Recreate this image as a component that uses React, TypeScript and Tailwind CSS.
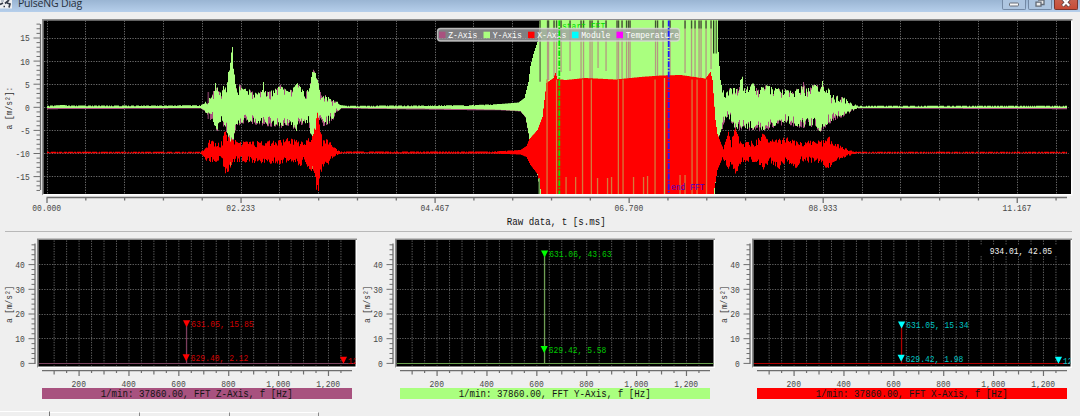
import React from "react";

type Pt = [number, number];

function at(pts: Pt[], x: number) {
  if (x <= pts[0][0]) return pts[0][1];
  for (let i = 1; i < pts.length; i++) {
    if (x <= pts[i][0]) {
      const [x0, y0] = pts[i - 1];
      const [x1, y1] = pts[i];
      return y0 + ((y1 - y0) * (x - x0)) / (x1 - x0);
    }
  }
  return pts[pts.length - 1][1];
}

function rand(n: number) {
  const v = Math.sin(n * 127.1 + 11.7) * 43758.5453;
  return v - Math.floor(v);
}

// Builds a filled min/max envelope with per-pixel jitter that grows with the amplitude.
function envelope(top: Pt[], bot: Pt[], centre: number, jitter: number, seed: number) {
  const up: string[] = [];
  const down: string[] = [];
  for (let x = 47; x < 1067; x++) {
    const rough = (x > 204 && x < 338) || (x > 721 && x < 858);
    const k = rough ? jitter : 0;
    let a = at(top, x);
    let b = at(bot, x);
    a += k * (Math.pow(rand(x + seed), 2) * 1.3 - 0.45) * Math.min(1, (centre - a) / 8);
    b -= k * (Math.pow(rand(x * 3 + seed), 2) * 1.3 - 0.45) * Math.min(1, (b - centre) / 8);
    if (!rough && Math.abs(a - centre) < 3) a += rand(x + seed * 2) > 0.72 ? 0.7 : 0;
    const yt = Math.max(20, a).toFixed(1);
    const yb = Math.min(194, b).toFixed(1);
    up.push(`${x},${yt} ${x + 1},${yt}`);
    down.push(`${x + 1},${yb} ${x},${yb}`);
  }
  return up.join(" ") + " " + down.reverse().join(" ");
}

const greenTop: Pt[] = [[47, 105.8], [62, 105], [72, 105.6], [200, 105.3], [204, 103.5], [207, 103], [212, 97], [215, 86], [218, 93], [221, 97], [223, 88], [226, 92], [228, 75], [230, 64], [231, 49], [232, 50], [233, 68], [235, 87], [238, 92], [239, 86], [242, 91], [250, 93], [256, 96], [262, 93], [263, 85], [265, 94], [270, 94], [275, 91], [280, 87], [285, 92], [291, 92], [297, 86], [303, 94], [308, 93], [311, 80], [312, 70], [314, 71], [316, 80], [318, 86], [319, 93], [323, 98], [326, 95], [329, 101], [335, 102], [340, 105], [345, 105.8], [470, 105.2], [500, 104], [518, 102.5], [524, 98], [528, 82], [530, 66], [533, 54], [537, 42], [539, 24], [540, 20], [717, 20], [718, 52], [720, 80], [722, 90], [725, 98], [728, 91], [738, 91], [740, 82], [742, 79], [743, 92], [750, 88], [753, 86], [757, 92], [765, 88], [775, 91], [790, 93], [802, 89], [803, 84], [805, 92], [810, 90], [816, 85], [820, 91], [822, 84], [825, 94], [828, 90], [831, 98], [840, 98.5], [850, 103], [857, 105.7], [1067, 105.7]];
const greenBot: Pt[] = [[47, 108], [200, 108], [207, 112], [213, 119], [216, 129], [220, 119], [225, 124], [228, 135], [230, 142], [232, 142], [234, 130], [237, 122], [245, 118], [260, 121], [270, 122], [280, 124], [290, 121], [296, 128], [298, 121], [308, 120], [312, 141], [314, 136], [318, 118], [322, 122], [327, 121], [335, 113], [341, 108], [470, 109], [500, 109.8], [520, 111], [525, 117], [528, 133], [530, 150], [537, 175], [540, 194], [714, 194], [717, 160], [719, 135], [722, 126], [725, 114], [733, 120], [735, 129], [740, 125], [763, 127], [775, 123], [785, 120], [800, 124], [815, 122], [820, 130], [823, 125], [833, 116], [843, 113], [857, 108], [1067, 108]];
const redTop: Pt[] = [[47, 151.7], [200, 151.7], [207, 148], [209, 141], [215, 145], [222, 143], [224, 131], [227, 137], [230, 140], [237, 143], [250, 144], [260, 143], [265, 145], [270, 142], [280, 142], [287, 140], [300, 143], [307, 141], [312, 138], [315, 127], [317, 114], [319, 125], [322, 142], [327, 140], [333, 148], [340, 151.6], [490, 151.6], [520, 150], [526, 146], [529, 139], [537, 130], [542, 117], [546, 83], [553, 78], [555, 73], [557, 79], [565, 80], [585, 78], [615, 79.5], [640, 77], [660, 75.5], [680, 75], [705, 78.5], [710, 72], [712, 80], [715, 120], [717, 134], [722, 147], [725, 144], [728, 134], [731, 143], [734, 129], [736, 133], [740, 143], [755, 143], [763, 135], [770, 142], [778, 141], [788, 139], [795, 143], [815, 143], [825, 142], [828, 137], [831, 143], [840, 147], [848, 150], [856, 151.7], [1067, 151.7]];
const redBot: Pt[] = [[47, 153.3], [200, 153.3], [207, 160], [215, 160], [222, 160], [225, 173], [229, 168], [233, 160], [240, 160], [260, 161], [280, 162], [290, 159], [300, 165], [303, 160], [310, 168], [314, 171], [316, 188], [318, 189], [320, 172], [325, 160], [327, 165], [331, 158], [335, 155], [342, 153.3], [490, 153.5], [520, 154.5], [526, 157], [530, 165], [537, 174], [541, 194], [713, 194], [717, 170], [722, 158], [725, 162], [728, 167], [732, 165], [735, 173], [741, 160], [755, 160], [763, 169], [770, 161], [779, 167], [785, 160], [796, 166], [800, 160], [820, 161], [828, 168], [833, 160], [845, 156], [856, 153.3], [1067, 153.3]];
const quiet = (x: number) => x < 200 || x > 860 || (x > 341 && x < 500);
const purpleTop = greenTop.map(([x, y]): Pt => [x, quiet(x) ? y + 1 : y + 1.5]);
const purpleBot = greenBot.map(([x, y]): Pt => [x, Math.min(194, quiet(x) ? y + 1.2 : y + 0.5)]);

// x and lower end of the dropouts in the saturated section
const stripes: Pt[] = [[540, 82], [547.5, 80], [548.5, 80], [554, 77], [556.5, 77], [561, 72], [570, 71], [581, 79], [583.5, 79], [590, 79], [592, 79], [598, 68], [606, 71], [617, 79], [618.5, 79], [622, 79], [626.5, 79], [628.5, 79], [630, 79], [655.5, 76], [657.5, 76], [663, 76], [670, 76], [685, 73], [691.5, 76], [695, 77], [699, 77], [701, 78], [706, 78], [711, 69]];
const fullLines = [547, 556.5, 582.5, 591.3, 618.3, 623, 655, 664.5, 692, 697, 706.5];
const shortLines: Pt[] = [[566, 177], [575.6, 177], [597.5, 178], [607.5, 178], [611.5, 177], [633.5, 177], [643.5, 177], [647.5, 176], [680, 175], [685, 175]];

const legend: [string, string, number][] = [
  ["Z-Axis", "#a8527f", 439],
  ["Y-Axis", "#aaff7f", 483.5],
  ["X-Axis", "#ff0000", 528],
  ["Module", "#00ffff", 572],
  ["Temperature", "#ff00ff", 616.5],
];

const mono = "font-['Liberation_Mono',monospace]";

type LabelProps = { x: number; y: number; fill: string; children: string; anchor?: "start" | "middle" | "end"; pitch?: number; size?: number };

// Condensed fixed-pitch label: every character takes `pitch` pixels.
function Label({ x, y, fill, children, anchor = "start", pitch = 4.8, size = 9.3 }: LabelProps) {
  return (
    <text x={x} y={y} fill={fill} fontSize={size} textAnchor={anchor} textLength={children.length * pitch} lengthAdjust="spacingAndGlyphs">
      {children}
    </text>
  );
}

function Frame({ x, y, w, h }: { x: number; y: number; w: number; h: number }) {
  return (
    <g>
      <rect x={x - 1.5} y={y - 1.5} width={w + 3} height={h + 3} fill="#fff" />
      <path d={`M${x - 1.5} ${y + h + 1.5}V${y - 1.5}H${x + w + 1.5}V${y}H${x}V${y + h}Z`} fill="#8c8c8c" />
      <rect x={x} y={y} width={w} height={h} fill="#000" />
    </g>
  );
}

function RawChart() {
  const xs = Array.from({ length: 27 }, (_, i) => 47 + i * 38.81);
  const y0 = (v: number) => 107.3 - v * 4.62;
  return (
    <svg className={`block h-[219px] w-[1080px] shrink-0 ${mono}`} viewBox="0 12 1080 219">
      <Frame x={43.5} y={20.5} w={1027.5} h={173.5} />
      <g stroke="#6a6a6a" strokeWidth="1" strokeDasharray="1.3 1.3">
        {xs.map((x) => <line key={x} x1={Math.floor(x) + 0.5} x2={Math.floor(x) + 0.5} y1="20.5" y2="194" />)}
        {[15, 10, 5, 0, -5, -10, -15].map((v) => (
          <line key={v} x1="44" x2="1069" y1={Math.floor(y0(v)) + 0.5} y2={Math.floor(y0(v)) + 0.5} />
        ))}
      </g>
      <polygon points={envelope(purpleTop, purpleBot, 107.3, 9, 5)} fill="#a8527f" />
      <rect x="207.5" y="92" width="1.6" height="27" fill="#6b3452" />
      <polygon points="316,78 318,80 320,94 316,94" fill="#a8527f" />
      <polygon points={envelope(greenTop, greenBot, 107.3, 7, 40)} fill="#aaff7f" />
      <g>
        {stripes.map(([x, b]) => (
          <g key={x}>
            <rect x={x - 0.6} y="20.5" width="1.3" height={b - 20.5} fill="#b39a80" />
            <rect x={x - 0.6} y="20.5" width="1.3" height="8" fill="#3d5a30" />
          </g>
        ))}
        <rect x="539.5" y="20.5" width="1.3" height="61" fill="#5e8a48" />
        <rect x="713" y="20.5" width="1.3" height="33" fill="#253a1c" />
        <rect x="715.7" y="20.5" width="1" height="33" fill="#253a1c" />
      </g>
      <polygon points={envelope(redTop, redBot, 152.5, 5, 90)} fill="#ff0000" />
      <g fill="#d5793b">
        {fullLines.map((x) => <rect key={x} x={x - 0.6} y="79.5" width="1.3" height="114.5" />)}
        {shortLines.map(([x, t]) => <rect key={x} x={x - 0.6} y={t} width="1.3" height={194 - t} />)}
        <rect x="663.9" y="78" width="1.2" height="116" fill="#cfb35b" />
        <rect x="230" y="162" width="1" height="4" />
        <rect x="312" y="166" width="1" height="3" />
      </g>
      <rect x="538.5" y="178" width="1.5" height="16" fill="#6a9f50" />
      <Label x={562} y={29} fill="#00dc00">start FFT</Label>
      <rect x="437.5" y="28.5" width="242" height="12.5" rx="3" fill="#a0a0a4" fillOpacity="0.8" stroke="#d8d8d8" strokeOpacity="0.8" strokeWidth="1.4" />
      {legend.map(([name, color, x]) => (
        <g key={name}>
          <rect x={x} y="31.7" width="6.5" height="6.5" fill={color} />
          <Label x={x + 9.2} y={38} fill="#fff" pitch={4.85}>{name}</Label>
        </g>
      ))}
      <line x1="559.3" x2="559.3" y1="20.5" y2="194" stroke="#00e800" strokeWidth="1.8" strokeDasharray="5.5 1.5 1.5 1.5" />
      <line x1="668.7" x2="668.7" y1="20.5" y2="194" stroke="#1c1cff" strokeWidth="1.8" strokeDasharray="6 1.3 1.6 1.3" />
      <Label x={671} y={189.5} fill="#4a00c8">end FFT</Label>

      <g stroke="#6e6e6e">
        <line x1="40.5" x2="40.5" y1="24" y2="190" strokeWidth="1.3" />
        {Array.from({ length: 37 }, (_, i) => i - 18).map((v) => (
          <line key={v} x1={v % 5 === 0 ? 33.5 : 36.5} x2="40" y1={y0(v)} y2={y0(v)} />
        ))}
        <line x1="46.5" x2="1067" y1="197.6" y2="197.6" strokeWidth="1.5" />
        {xs.map((x, i) => <line key={x} x1={x} x2={x} y1="198" y2={i % 5 === 0 ? 203 : 200.5} strokeWidth="1.3" />)}
      </g>
      {[15, 10, 5, 0, -5, -10, -15].map((v) => (
        <Label key={v} x={29.8} y={y0(v) + 3.4} anchor="end" fill="#484848">{String(v)}</Label>
      ))}
      {["00.000", "02.233", "04.467", "06.700", "08.933", "11.167"].map((t, i) => (
        <Label key={t} x={46.7 + i * 194.05} y={211.2} anchor="middle" fill="#484848">{t}</Label>
      ))}
      <Label x={556.3} y={225} anchor="middle" fill="#151515" pitch={5.5} size={10.6}>Raw data, t [s.ms]</Label>
      <g transform="translate(11.5 129.5) rotate(-90)">
        <Label x={0} y={0} fill="#303030" pitch={4.75} size={9.6}>a [m/s²]:</Label>
      </g>
    </svg>
  );
}

type Marker = { hz: number; v: number; text: string };
type FftProps = {
  axis: string;
  bar: string;
  line: string;
  peak: string;
  marker: string;
  label: string;
  markers: Marker[];
  cursor?: string;
};

function FftChart({ axis, bar, line, peak, marker, label, markers, cursor }: FftProps) {
  const X = (hz: number) => 29.2 + hz * 0.2494;
  const Y = (v: number) => 363.4 - v * 2.47;
  const top = Math.max(...markers.map((m) => m.v));
  const halves = Array.from({ length: 24 }, (_, i) => 100 + i * 50);
  return (
    <section className="flex min-w-0 flex-col">
      <svg className={`block h-[156px] w-[357px] ${mono}`} viewBox="0 232 357 156">
        <clipPath id={`plot${axis}`}><rect x="38.5" y="240" width="317" height="126.5" /></clipPath>
        <Frame x={38.5} y={240} w={317} h={126.5} />
        <g stroke="#606060" strokeDasharray="1.3 1.3">
          {halves.map((h) => <line key={h} x1={X(h)} x2={X(h)} y1="240.5" y2="366" />)}
          {[10, 20, 30, 40].map((v) => <line key={v} x1="39" x2="355" y1={Math.floor(Y(v)) + 0.5} y2={Math.floor(Y(v)) + 0.5} />)}
        </g>
        <g clipPath={`url(#plot${axis})`}>
          <rect x="39" y="363" width="317" height="1" fill={line} />
          <rect x="185.9" y={Y(top)} width="1.3" height={363.5 - Y(top)} fill={peak} />
          {markers.map((m) => (
            <g key={m.text}>
              <path d={`M${X(m.hz) - 3.6} ${Y(m.v) - 3.6}h7.2l-3.6 7z`} fill={marker} />
              <Label x={X(m.hz) + 4.6} y={Y(m.v) + 3.1} fill={label}>{m.text}</Label>
            </g>
          ))}
          {cursor && (
            <g>
              <rect x="265" y="245" width="80" height="11" fill="#000" />
              <Label x={274.7} y={253.9} fill="#f0f0f0">{cursor}</Label>
            </g>
          )}
        </g>
        <g stroke="#6e6e6e">
          <line x1="35" x2="35" y1="243.5" y2="364" strokeWidth="1.3" />
          {Array.from({ length: 25 }, (_, i) => i * 2).map((v) => (
            <line key={v} x1={v % 10 === 0 ? 28.5 : 31.5} x2="35" y1={Y(v)} y2={Y(v)} />
          ))}
          <line x1="42" x2="352" y1="370.7" y2="370.7" strokeWidth="1.3" />
          {halves.map((h) => <line key={h} x1={X(h)} x2={X(h)} y1="371" y2={h % 200 === 0 ? 376 : h % 100 === 0 ? 374.5 : 373} strokeWidth="1.2" />)}
        </g>
        {[0, 10, 20, 30, 40].map((v) => <Label key={v} x={24.9} y={Y(v) + 3.3} anchor="end" fill="#484848">{String(v)}</Label>)}
        {[200, 400, 600, 800, 1000, 1200].map((v) => (
          <Label key={v} x={X(v) - 0.3} y={387} anchor="middle" fill="#484848">{v.toLocaleString("en-US")}</Label>
        ))}
        <g transform="translate(11.5 323) rotate(-90)">
          <Label x={0} y={0} fill="#303030" pitch={4.65} size={9.6}>a [m/s²]</Label>
        </g>
      </svg>
      <div className={`ml-[42px] h-[11px] w-[310px] ${bar}`}>
        <svg className={`block h-[11px] w-[310px] ${mono}`} viewBox="0 0 310 11">
          <Label x={154.7} y={9} anchor="middle" fill="#151515" pitch={5.49} size={10.6}>{`1/min: 37860.00, FFT ${axis}-Axis, f [Hz]`}</Label>
        </svg>
      </div>
    </section>
  );
}

function TitleBar() {
  const btn = "flex h-[10px] w-6 items-start justify-center overflow-hidden rounded-b-[2px] border border-t-0";
  return (
    <header className="flex h-3 shrink-0 items-start overflow-hidden bg-gradient-to-b from-[#9ab5d3] to-[#b6cfeb] pr-[2px]">
      <svg className="h-[9px] w-[13px] shrink-0" viewBox="0 0 13 9">
        <rect width="12" height="8.5" fill="#eef0f2" />
        <path d="M0 4.5L3 3M5 3.5L9 0M7 3l3 1-1 3.5M3.5 6.5h1.5" stroke="#343b48" strokeWidth="1.7" fill="none" />
        <path d="M1 1h3" stroke="#8793a3" />
      </svg>
      <div className="ml-[5px] mt-[-4px] h-4 grow whitespace-nowrap font-['Open_Sans',sans-serif] text-[10.5px] leading-[14px] tracking-[-0.2px] text-[#26303c]">PulseNG Diag</div>
      <div className="flex gap-[2px]">
        <div className={`${btn} border-[#7389a5] bg-[#adc5e0]`}>
          <svg className="h-[9px] w-[22px]" viewBox="0 0 22 9"><rect x="6.5" y="3" width="9" height="3" rx="0.8" fill="#f7f7f7" stroke="#686f7a" /></svg>
        </div>
        <div className={`${btn} border-[#7389a5] bg-[#adc5e0]`}>
          <svg className="h-[9px] w-[22px]" viewBox="0 0 22 9"><path d="M9 0h6v4.5h-3M7 2.2h5v4H7z" fill="#ececec" stroke="#626a76" strokeWidth="1.3" /></svg>
        </div>
        <div className={`${btn} border-[#79352d] bg-gradient-to-b from-[#c8604d] to-[#c74b35]`}>
          <svg className="h-[9px] w-[22px]" viewBox="0 0 22 9"><path d="M7.5-1.5l7 7.5M14.5-1.5l-7 7.5" stroke="#5d4748" strokeWidth="3.8" /><path d="M7.8-1.2l6.4 7M14.2-1.2l-6.4 7" stroke="#fff" strokeWidth="2.2" /></svg>
        </div>
      </div>
    </header>
  );
}

export default function App() {
  return (
    <main className="flex h-[416px] w-[1080px] flex-col overflow-hidden bg-[#efefef]">
      <TitleBar />
      <RawChart />
      <div className="ml-[5px] h-px w-[1067px] shrink-0 bg-[#b8b8b8]" />
      <div className="grid shrink-0 grid-cols-[357.5px_357.5px_365px]">
        <FftChart
          axis="Z" bar="bg-[#a8527f]" line="#7a4560" peak="#7b3d5d" marker="#ff0000" label="#d00000"
          markers={[{ hz: 631.05, v: 16, text: "631.05, 15.85" }, { hz: 629.4, v: 2.2, text: "629.40, 2.12" }, { hz: 1260, v: 1.2, text: "12" }]}
        />
        <FftChart
          axis="Y" bar="bg-[#aaff7f]" line="#6aa04f" peak="#6f9f55" marker="#00ff00" label="#00c800"
          markers={[{ hz: 631.06, v: 44.3, text: "631.06, 43.63" }, { hz: 629.42, v: 5.6, text: "629.42, 5.58" }]}
        />
        <FftChart
          axis="X" bar="bg-[#ff0000]" line="#b00000" peak="#b00000" marker="#00ffff" label="#00c4c4" cursor="934.01, 42.05"
          markers={[{ hz: 631.05, v: 15.5, text: "631.05, 15.34" }, { hz: 629.42, v: 2, text: "629.42, 1.98" }, { hz: 1260, v: 1.2, text: "12" }]}
        />
      </div>
      <nav className="mt-auto flex h-[5px] shrink-0">
        <div className="h-[5px] w-[50px] border-r border-t border-r-[#777] border-t-white" />
        <div className="mt-px h-1 w-[90px] border-r border-t border-r-[#8a8a8a] border-t-white" />
        <div className="mt-px h-1 w-[90px] border-r border-t border-r-[#8a8a8a] border-t-white" />
        <div className="mt-px h-1 w-[89px] border-r border-t border-r-[#8a8a8a] border-t-white" />
      </nav>
    </main>
  );
}
